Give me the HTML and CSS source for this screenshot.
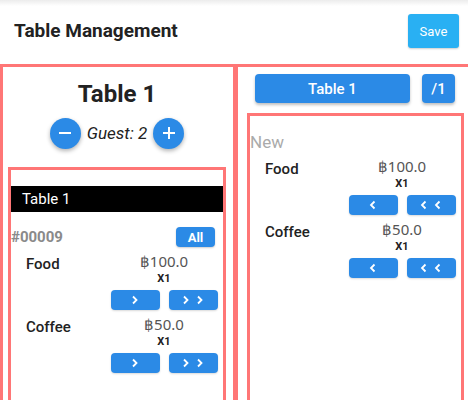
FILE: index.html
```html
<!DOCTYPE html>
<html>
<head>
<meta charset="utf-8">
<link rel="stylesheet" href="styles.css">
</head>
<body>
<div class="shade"></div>
<header class="bar">
  <div class="title">Table Management</div>
  <button class="save">Save</button>
</header>
<main class="panels">
  <section class="panel left">
    <h1 class="tname">Table 1</h1>
    <div class="guest">
      <span class="circle"><svg width="14" height="14" viewBox="0 0 14 14"><path d="M1 7h12" stroke="#fff" stroke-width="2"/></svg></span>
      <span class="glabel">Guest: 2</span>
      <span class="circle"><svg width="14" height="14" viewBox="0 0 14 14"><path d="M1 7h12M7 1v12" stroke="#fff" stroke-width="2"/></svg></span>
    </div>
    <div class="box lbox">
      <div class="blackbar">Table 1</div>
      <div class="orderrow">
        <span class="ordno">#00009</span>
        <button class="all">All</button>
      </div>
      <div class="item">
        <div class="iname">Food</div>
        <div class="icol">
          <div class="price">฿100.0</div>
          <div class="qty">X1</div>
          <div class="btns">
            <span class="btn"><svg width="10" height="10" viewBox="0 0 10 10"><path d="M3 1.5l3.5 3.5-3.5 3.5" fill="none" stroke="#fff" stroke-width="1.8"/></svg></span>
            <span class="btn"><svg width="24" height="10" viewBox="0 0 24 10"><path d="M3 1.5l3.5 3.5-3.5 3.5M17 1.5l3.5 3.5-3.5 3.5" fill="none" stroke="#fff" stroke-width="1.8"/></svg></span>
          </div>
        </div>
      </div>
      <div class="item">
        <div class="iname">Coffee</div>
        <div class="icol">
          <div class="price">฿50.0</div>
          <div class="qty">X1</div>
          <div class="btns">
            <span class="btn"><svg width="10" height="10" viewBox="0 0 10 10"><path d="M3 1.5l3.5 3.5-3.5 3.5" fill="none" stroke="#fff" stroke-width="1.8"/></svg></span>
            <span class="btn"><svg width="24" height="10" viewBox="0 0 24 10"><path d="M3 1.5l3.5 3.5-3.5 3.5M17 1.5l3.5 3.5-3.5 3.5" fill="none" stroke="#fff" stroke-width="1.8"/></svg></span>
          </div>
        </div>
      </div>
    </div>
  </section>
  <section class="panel right">
    <div class="tabrow">
      <button class="tbtn">Table 1</button>
      <button class="tbtn small">/1</button>
    </div>
    <div class="box rbox">
      <div class="new">New</div>
      <div class="item">
        <div class="iname">Food</div>
        <div class="icol">
          <div class="price">฿100.0</div>
          <div class="qty">X1</div>
          <div class="btns">
            <span class="btn"><svg width="10" height="10" viewBox="0 0 10 10"><path d="M6.5 1.5l-3.5 3.5 3.5 3.5" fill="none" stroke="#fff" stroke-width="1.8"/></svg></span>
            <span class="btn"><svg width="24" height="10" viewBox="0 0 24 10"><path d="M6.5 1.5l-3.5 3.5 3.5 3.5M20.5 1.5l-3.5 3.5 3.5 3.5" fill="none" stroke="#fff" stroke-width="1.8"/></svg></span>
          </div>
        </div>
      </div>
      <div class="item">
        <div class="iname">Coffee</div>
        <div class="icol">
          <div class="price">฿50.0</div>
          <div class="qty">X1</div>
          <div class="btns">
            <span class="btn"><svg width="10" height="10" viewBox="0 0 10 10"><path d="M6.5 1.5l-3.5 3.5 3.5 3.5" fill="none" stroke="#fff" stroke-width="1.8"/></svg></span>
            <span class="btn"><svg width="24" height="10" viewBox="0 0 24 10"><path d="M6.5 1.5l-3.5 3.5 3.5 3.5M20.5 1.5l-3.5 3.5 3.5 3.5" fill="none" stroke="#fff" stroke-width="1.8"/></svg></span>
          </div>
        </div>
      </div>
    </div>
  </section>
</main>
</body>
</html>
```
FILE: styles.css
```css
html, body {
  margin: 0;
  padding: 0;
  width: 468px;
  height: 400px;
  overflow: hidden;
  background: #fff;
  font-family: Roboto, "Noto Sans", sans-serif;
}
.shade {
  position: absolute;
  top: 0;
  left: 0;
  width: 468px;
  height: 6px;
  background: linear-gradient(#ececec, rgba(255,255,255,0));
}
.bar {
  height: 64px;
  display: flex;
  align-items: center;
  justify-content: space-between;
  padding: 0 9px 0 14px;
  box-sizing: border-box;
}
.title {
  font-size: 19px;
  font-weight: 700;
  color: #222;
  margin-top: -3px;
}
.save {
  width: 51px;
  height: 34px;
  border: none;
  border-radius: 3px;
  background: #29b0f3;
  color: #fff;
  font-family: Roboto, sans-serif;
  font-size: 13px;
  padding: 0;
  margin-top: -2px;
  box-shadow: 0 1px 2px rgba(0,0,0,0.2);
}
.panels {
  display: flex;
  width: 480px;
}
.panel {
  border: 3px solid #ff7676;
  box-sizing: border-box;
  height: 360px;
}
.left {
  width: 236px;
  padding: 0 7px 0 5px;
}
.right {
  width: 240px;
  padding: 0 0 0 9px;
  margin-left: -1px;
}
.tname {
  margin: 13px 0 0;
  text-align: center;
  font-size: 24px;
  font-weight: 700;
  color: #222;
  line-height: 28px;
}
.guest {
  display: flex;
  align-items: center;
  justify-content: center;
  gap: 4px;
  margin-top: 9px;
  height: 32px;
}
.circle {
  width: 31px;
  height: 31px;
  border-radius: 50%;
  background: #2b8ae6;
  display: flex;
  align-items: center;
  justify-content: center;
  box-shadow: 0 2px 4px rgba(0,0,0,0.3);
}
.glabel {
  font-style: italic;
  font-size: 17px;
  color: #222;
  padding: 0 2px;
}
.box {
  border: 3px solid #ff7676;
  box-sizing: border-box;
  height: 300px;
}
.lbox {
  margin-top: 18px;
  padding-top: 16px;
}
.blackbar {
  background: #000;
  color: #fff;
  height: 26px;
  line-height: 26px;
  font-size: 15px;
  padding-left: 11px;
}
.orderrow {
  display: flex;
  justify-content: space-between;
  align-items: center;
  margin-top: 15px;
  padding-right: 8px;
  height: 20px;
}
.ordno {
  font-size: 15px;
  font-weight: 700;
  color: #8a8a8a;
}
.all {
  width: 39px;
  height: 20px;
  border: none;
  border-radius: 4px;
  background: #2b8ae6;
  color: #fff;
  font-family: Roboto, sans-serif;
  font-weight: 700;
  font-size: 13px;
  padding: 0;
  box-shadow: 0 1px 2px rgba(0,0,0,0.2);
}
.item {
  display: flex;
  justify-content: space-between;
  align-items: flex-start;
  padding: 0 5px 0 15px;
  margin-top: 5px;
}
.lbox .item:first-of-type { margin-top: 8px; }
.iname {
  font-size: 15px;
  font-weight: 500;
  color: #222;
  margin-top: 3px;
}
.icol {
  width: 108px;
  display: flex;
  flex-direction: column;
  align-items: center;
}
.price {
  font-family: "Noto Sans", Roboto, sans-serif;
  font-size: 15px;
  color: #555;
  line-height: 18px;
}
.qty {
  font-size: 11px;
  font-weight: 700;
  color: #222;
  line-height: 14px;
  margin-top: 2px;
}
.btns {
  display: flex;
  gap: 9px;
  margin-top: 4px;
}
.btn {
  width: 49px;
  height: 20px;
  border-radius: 4px;
  background: #2b8ae6;
  display: flex;
  align-items: center;
  justify-content: center;
  box-shadow: 0 1px 2px rgba(0,0,0,0.15);
}
.tabrow {
  display: flex;
  gap: 12px;
  margin: 7px 0 0 8px;
  height: 29px;
}
.tbtn {
  width: 155px;
  height: 29px;
  border: none;
  border-radius: 4px;
  background: #2b8ae6;
  color: #fff;
  font-family: Roboto, sans-serif;
  font-size: 15px;
  font-weight: 500;
  padding: 0;
  box-shadow: 0 2px 3px rgba(0,0,0,0.25);
}
.tbtn.small {
  width: 33px;
}
.rbox {
  width: 217px;
  margin-top: 10px;
}
.new {
  font-size: 17px;
  color: #aaa;
  margin-top: 16px;
  line-height: 20px;
}
.rbox .item:first-of-type { margin-top: 5px; }
```
